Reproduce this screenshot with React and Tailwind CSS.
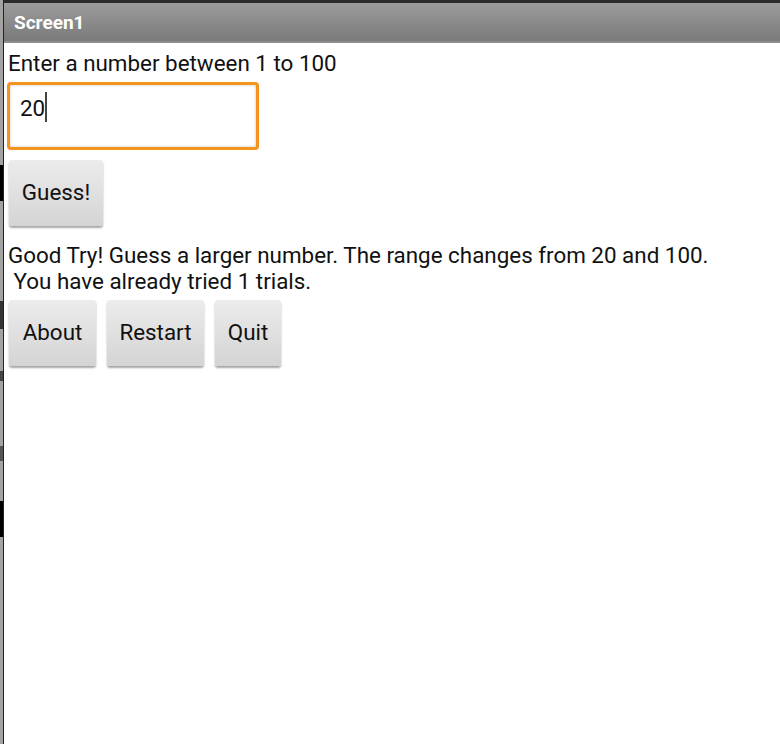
import React from "react";

const btn =
  "h-[66px] rounded-[3px] bg-gradient-to-b from-[#ececec] to-[#d4d4d4] shadow-[0_2px_2px_rgba(0,0,0,0.35)] text-[22.4px] text-[#111] flex items-center justify-center";

export default function App() {
  return (
    <div className="w-[780px] h-[744px] bg-white flex font-['Roboto',sans-serif] overflow-hidden">
      {/* window edge behind */}
      <div className="w-[4px] flex flex-row shrink-0">
        <div className="w-[3px] flex flex-col bg-[#a3a3a3]">
          <div className="h-[165px]" />
          <div className="h-[36px] bg-black" />
          <div className="h-[100px]" />
          <div className="h-[28px] bg-[#333]" />
          <div className="h-[42px]" />
          <div className="h-[10px] bg-[#444]" />
          <div className="h-[65px]" />
          <div className="h-[15px] bg-[#555]" />
          <div className="h-[40px]" />
          <div className="h-[36px] bg-black" />
        </div>
        <div className="w-[1px] bg-[#222]" />
      </div>

      <div className="flex-1 flex flex-col">
        <div className="h-[3px] bg-[#2b2b2b]" />
        <div className="h-[40px] bg-gradient-to-b from-[#9c9c9c] to-[#7a7a7a] border-b-[2px] border-[#8e8e8e] flex items-center pl-[10px] pt-[1px]">
          <span className="text-white font-bold text-[19px] leading-none">Screen1</span>
        </div>

        <div className="pl-[3px] pt-[7px] flex flex-col">
          <div className="text-[22.4px] leading-[26px] text-[#111] pl-[1px]">Enter a number between 1 to 100</div>

          <div className="mt-[6px] w-[252px] h-[68px] rounded-[4px] border-[3px] border-[#f4931e] shadow-[inset_0_0_3px_rgba(0,0,0,0.25)] flex items-start pl-[10px] pt-[10px]">
            <span className="text-[22.4px] leading-[26px] text-[#111]">20</span>
            <span className="w-[2px] h-[30px] -mt-[3px] bg-[#444]" />
          </div>

          <div className="mt-[10px] ml-[2px] flex">
            <div className={btn + " w-[94px]"}>Guess!</div>
          </div>

          <div className="mt-[16px] text-[22.4px] leading-[26px] text-[#111] pl-[1px]">
            <div>Good Try! Guess a larger number. The range changes from 20 and 100.</div>
            <div>&nbsp;You have already tried 1 trials.</div>
          </div>

          <div className="mt-[6px] ml-[2px] flex gap-[11px]">
            <div className={btn + " w-[87px]"}>About</div>
            <div className={btn + " w-[97px]"}>Restart</div>
            <div className={btn + " w-[66px]"}>Quit</div>
          </div>
        </div>
      </div>
    </div>
  );
}
